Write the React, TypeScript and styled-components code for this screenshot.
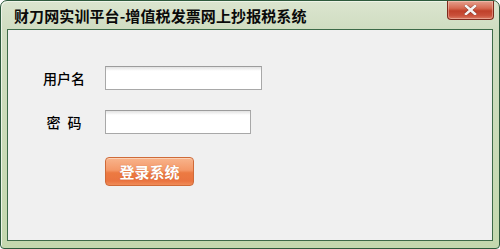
import React from "react";
import styled, { createGlobalStyle } from "styled-components";

const GlobalStyle = createGlobalStyle`
  html, body {
    margin: 0;
    padding: 0;
    background: #ffffff;
  }
  * {
    box-sizing: border-box;
  }
`;

const cjk = `"Noto Sans CJK SC", "Noto Sans", sans-serif`;

const Window = styled.div`
  width: 500px;
  height: 249px;
  display: flex;
  flex-direction: column;
  padding: 0 6px 7px 6px;
  border: 1px solid #2e5a3c;
  border-radius: 7px 7px 4px 4px;
  background: linear-gradient(to bottom, #dbe5cf 0px, #d0ddc1 28px, #c4d8ae 100%);
  box-shadow: inset 1px 1px 0 #eef4e8;
  font-family: ${cjk};
`;

const TitleBar = styled.div`
  height: 28px;
  display: flex;
  align-items: center;
  justify-content: space-between;
  padding-left: 7px;
`;

const Title = styled.div`
  font-size: 15px;
  font-weight: 700;
  color: #0a0a0a;
  letter-spacing: 0.1px;
  line-height: 1;
  padding-top: 1px;
`;

const CloseButton = styled.div`
  align-self: flex-start;
  width: 47px;
  height: 19px;
  margin-right: -1px;
  border: 1px solid #7e2a1c;
  border-top: none;
  border-radius: 0 0 4px 4px;
  background: linear-gradient(
    to bottom,
    #e4a08e 0%,
    #d66a52 40%,
    #c0402a 55%,
    #c9503a 80%,
    #dc7a62 100%
  );
  box-shadow: inset 0 0 0 1px rgba(255, 220, 210, 0.4);
  display: flex;
  align-items: center;
  justify-content: center;
`;

const Body = styled.div`
  flex: 1;
  background: #f0f0f0;
  border: 1px solid #3d6a48;
  padding: 36px 0 0 15px;
`;

const Form = styled.div`
  display: grid;
  grid-template-columns: 82px auto;
  row-gap: 20px;
  align-items: center;
  justify-content: start;
`;

const Label = styled.div<{ $spaced?: boolean }>`
  text-align: center;
  font-size: 14px;
  font-weight: 500;
  color: #000;
  word-spacing: ${(p) => (p.$spaced ? "4px" : "0")};
  white-space: pre;
`;

const Input = styled.input<{ $w: number }>`
  width: ${(p) => p.$w}px;
  height: 24px;
  margin: 0;
  padding: 2px 4px;
  border: 1px solid #a8a8a8;
  border-top-color: #9c9c9c;
  background: linear-gradient(to bottom, #e2e2e2 0px, #ffffff 4px);
  font-family: ${cjk};
  font-size: 13px;
  outline: none;
`;

const Spacer = styled.div``;

const LoginButton = styled.button`
  margin-top: 3px;
  width: 89px;
  height: 29px;
  padding: 0;
  border: 1px solid #cf6a38;
  border-radius: 4px;
  background: linear-gradient(
    to bottom,
    #f8b48c 0%,
    #f49868 45%,
    #ec7a42 55%,
    #ea7440 85%,
    #f08c58 100%
  );
  box-shadow: inset 0 1px 0 rgba(255, 230, 210, 0.6);
  color: #ffffff;
  font-family: ${cjk};
  font-size: 15px;
  font-weight: 700;
  text-shadow: 0 0 1px rgba(160, 60, 20, 0.5);
  cursor: pointer;
`;

const CloseGlyph = () => (
  <svg width="13" height="10" viewBox="0 0 13 10">
    <path
      d="M2 1 L11 9 M11 1 L2 9"
      stroke="#5a1a10"
      strokeWidth="3.8"
      strokeLinecap="square"
      opacity="0.45"
    />
    <path
      d="M2 1 L11 9 M11 1 L2 9"
      stroke="#f4f4f4"
      strokeWidth="2.6"
      strokeLinecap="square"
    />
  </svg>
);

export default function App() {
  return (
    <>
      <GlobalStyle />
      <Window>
        <TitleBar>
          <Title>财刀网实训平台-增值税发票网上抄报税系统</Title>
          <CloseButton>
            <CloseGlyph />
          </CloseButton>
        </TitleBar>
        <Body>
          <Form>
            <Label>用户名</Label>
            <Input $w={157} />
            <Label $spaced>密 码</Label>
            <Input $w={146} type="password" />
            <Spacer />
            <LoginButton>登录系统</LoginButton>
          </Form>
        </Body>
      </Window>
    </>
  );
}
